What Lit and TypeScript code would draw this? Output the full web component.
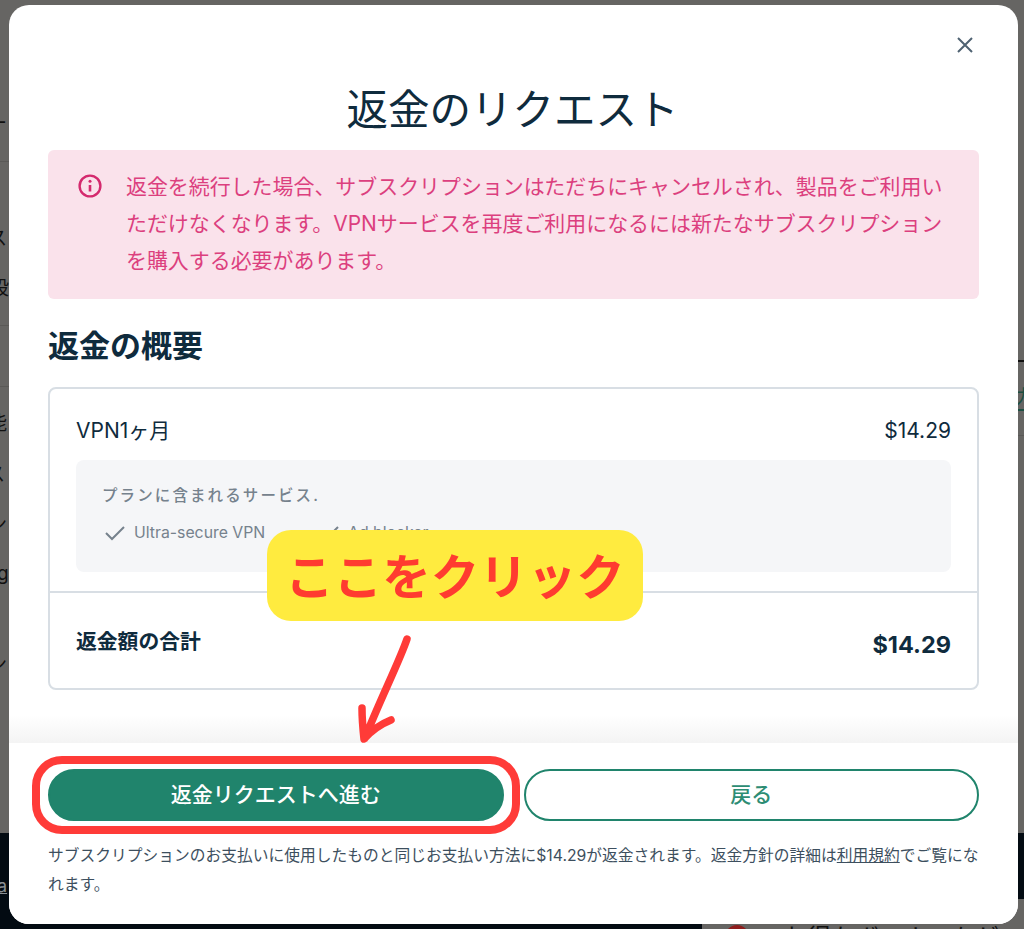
import { LitElement, html, css, svg } from "lit";
import { customElement } from "lit/decorators.js";

const frags: [number, number, string][] = [
  [-12, 113, "ー"], [-12, 228, "ス"], [-10, 278, "設"], [-12, 413, "能"],
  [-14, 464, "ス"], [-12, 514, "ン"], [-3, 563, "g"], [-12, 654, "ン"],
];

@customElement("app-root")
export class AppRoot extends LitElement {
  static styles = css`
    :host { display: block; width: 1024px; height: 929px; position: relative; overflow: hidden; background: #666563;
      font-family: Inter, "Noto Sans CJK JP", sans-serif; color: #0f2b3d; }
    * { box-sizing: border-box; }
    .bg { position: absolute; inset: 0; overflow: hidden; }
    .frag { position: absolute; font-size: 19px; line-height: 22px; color: #111; white-space: nowrap; }
    .rule { position: absolute; height: 1px; background: #5a5957; }
    .dark-l { position: absolute; left: 0; top: 833px; width: 702px; height: 96px; background: #030b12; }
    .dark-r { position: absolute; left: 1018px; top: 833px; width: 6px; height: 66px; background: #030b12; }
    .line-r { position: absolute; left: 1018px; top: 360px; width: 6px; height: 2px; background: #111; }
    .green-r { position: absolute; left: 1015px; top: 387px; font-size: 19px; line-height: 22px; color: #1c4f42; border-bottom: 2px solid #1c4f42; }
    .a-l { position: absolute; left: -3px; top: 875px; font-size: 18px; line-height: 22px; color: #8a8f93; text-decoration: underline; }
    .red-dot { position: absolute; left: 725px; top: 925px; width: 24px; height: 24px; border-radius: 50%; background: #8e1d1d; }
    .promo { position: absolute; left: 783px; top: 923px; font-size: 24px; line-height: 30px; color: #111; white-space: nowrap; }

    .stage { position: relative; height: 929px; padding: 5px 6px 5px 9px; display: flex; }
    .modal { position: relative; flex: 1; background: #fff; border-radius: 20px; display: flex; flex-direction: column; overflow: hidden; }
    .close { position: absolute; top: 31px; right: 44px; width: 18px; height: 18px; display: block; }
    .body { flex: 1; padding: 80px 39px 0; }
    h1 { margin: 0; height: 65px; padding-right: 2px; font-size: 41.5px; line-height: 50px; font-weight: 400; text-align: center; color: #0f2b3d; }
    .alert { height: 149px; background: #fae2eb; border-radius: 6px; padding: 18px 34px 0 30px; display: flex; gap: 24px; color: #dc3f7e; font-size: 20.95px; line-height: 37px; }
    .alert svg { flex: none; width: 24px; height: 24px; margin-top: 6px; }
    .alert p { margin: 0; }
    h2 { margin: 26px 0 0; font-size: 31px; line-height: 42px; font-weight: 700; color: #0f2b3d; }
    .card { margin-top: 20px; height: 303px; border: 2px solid #d8dee4; border-radius: 8px; display: flex; flex-direction: column; }
    .top { height: 204px; padding: 22px 26px 0; border-bottom: 2px solid #d8dee4; }
    .row { display: flex; justify-content: space-between; font-size: 21px; line-height: 40px; color: #0f2b3d; }
    .panel { margin-top: 9px; height: 112px; background: #f5f6f8; border-radius: 8px; padding: 25px 26px 0; color: #76828d; }
    .panel-title { font-size: 15.5px; line-height: 22px; font-weight: 500; letter-spacing: 2.1px; }
    .feats { display: flex; gap: 24px; margin-top: 15px; font-size: 15.8px; line-height: 22px; }
    .feat { display: flex; align-items: center; gap: 8px; width: 190px; }
    .feat svg { width: 22px; height: 18px; flex: none; margin-left: 2px; }
    .total { padding: 29px 26px 0; display: flex; justify-content: space-between; align-items: flex-start; }
    .total .lbl { font-size: 20.8px; line-height: 40px; font-weight: 700; padding-top: 0; }
    .total .amt { font-size: 23.5px; line-height: 46px; font-weight: 700; }
    .foot { position: relative; height: 181px; padding: 26px 39px 0; background: #fff; }
    .fade { position: absolute; left: 0; right: 0; top: -28px; height: 28px; background: linear-gradient(to bottom, rgba(240,240,240,0), rgba(240,240,240,.75)); }
    .btns { display: flex; gap: 20px; }
    .btn { flex: 1; height: 52px; border-radius: 26px; font-size: 21px; line-height: 48px; font-weight: 500; display: flex; align-items: flex-start; justify-content: center; border: 2px solid #20846c; }
    .primary { background: #20846c; color: #fff; }
    .ghost { background: #fff; color: #2d8d74; }
    .foot p { margin: 20px 0 0; font-size: 15.75px; line-height: 29px; color: #3d4f5e; }
    .foot a { color: inherit; text-decoration: underline; }

    .outline { position: absolute; left: 32px; top: 756px; width: 488px; height: 78px; border: 8px solid #ff3b38; border-radius: 30px; }
    .callout { position: absolute; left: 267px; top: 530px; width: 376px; height: 91px; background: #ffeb3f; border-radius: 24px; color: #ff3b30; font-size: 48.5px; line-height: 96px; font-weight: 700; text-align: center; white-space: nowrap; }
    .arrow { position: absolute; left: 350px; top: 630px; width: 70px; height: 120px; }
  `;

  render() {
    return html`
      <div class="bg">
        ${frags.map(([x, y, t]) => html`<span class="frag" style="left:${x}px;top:${y}px">${t}</span>`)}
        <div class="rule" style="left:0;top:161px;width:9px"></div>
        <div class="rule" style="left:0;top:325px;width:9px"></div>
        <div class="rule" style="left:0;top:386px;width:9px"></div>
        <div class="rule" style="left:1018px;top:435px;width:6px"></div>
        <div class="dark-l"></div><div class="dark-r"></div>
        <div class="line-r"></div><span class="green-r">力</span>
        <span class="a-l">a</span>
        <div class="red-dot"></div>
        <span class="promo">お得なボーナスをゲット</span>
      </div>
      <div class="stage">
        <section class="modal">
          <svg class="close" viewBox="0 0 18 18" fill="none" stroke="#4f6272" stroke-width="2"><path d="M2 2l14 14M16 2L2 16"/></svg>
          <div class="body">
            <h1>返金のリクエスト</h1>
            <div class="alert">
              <svg viewBox="0 0 24 24" fill="none" stroke="#d42a6e" stroke-width="2.4"><circle cx="12" cy="12" r="10.4"/><path d="M12 11v6.5" stroke-width="2.6"/><circle cx="12" cy="7.3" r="1.5" fill="#d42a6e" stroke="none"/></svg>
              <p>返金を続行した場合、サブスクリプションはただちにキャンセルされ、製品をご利用いただけなくなります。VPNサービスを再度ご利用になるには新たなサブスクリプションを購入する必要があります。</p>
            </div>
            <h2>返金の概要</h2>
            <div class="card">
              <div class="top">
                <div class="row"><span>VPN1ヶ月</span><span>$14.29</span></div>
                <div class="panel">
                  <div class="panel-title">プランに含まれるサービス.</div>
                  <div class="feats">
                    <span class="feat">${this.check()}Ultra-secure VPN</span>
                    <span class="feat">${this.check()}Ad blocker</span>
                  </div>
                </div>
              </div>
              <div class="total"><span class="lbl">返金額の合計</span><span class="amt">$14.29</span></div>
            </div>
          </div>
          <div class="foot">
            <div class="fade"></div>
            <div class="btns">
              <div class="btn primary">返金リクエストへ進む</div>
              <div class="btn ghost">戻る</div>
            </div>
            <p>サブスクリプションのお支払いに使用したものと同じお支払い方法に$14.29が返金されます。返金方針の詳細は<a>利用規約</a>でご覧になれます。</p>
          </div>
        </section>
      </div>
      <div class="outline"></div>
      <div class="callout">ここをクリック</div>
      <svg class="arrow" viewBox="0 0 70 120" fill="none" stroke="#ff3b38" stroke-width="7.5" stroke-linecap="round" stroke-linejoin="round">
        <path d="M57 9C50 30 30 70 15 108M12 78C12 90 13 100 14 109C22 100 31 94 41 90"/>
      </svg>
    `;
  }

  check() {
    return svg`<svg viewBox="0 0 22 18" fill="none" stroke="#76828d" stroke-width="2"><path d="M2 9l6 6L20 3"/></svg>`;
  }
}
